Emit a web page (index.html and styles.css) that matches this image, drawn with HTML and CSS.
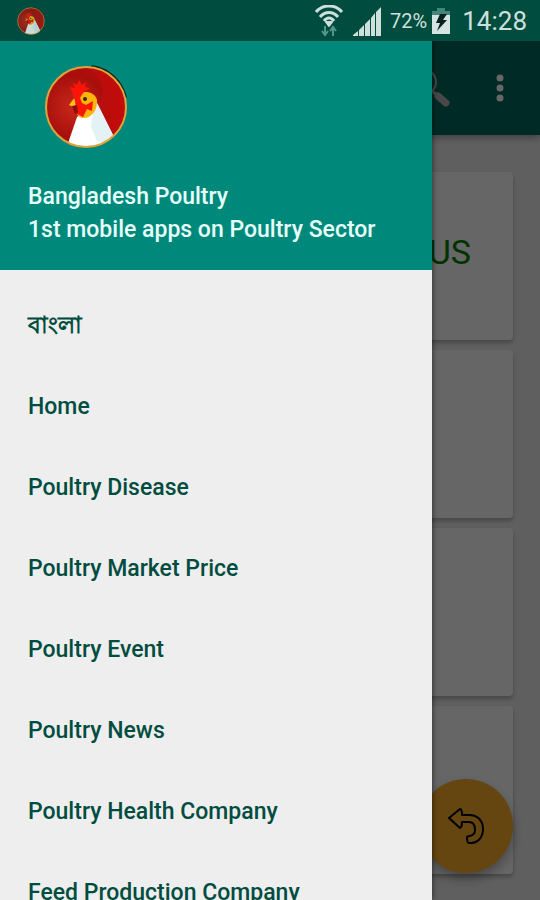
FILE: index.html
```html
<!DOCTYPE html>
<html lang="en">
<head>
    <meta charset="UTF-8">
    <meta name="viewport" content="width=device-width, initial-scale=1.0">
    <title>Bangladesh Poultry</title>
    <link rel="stylesheet" href="styles.css">
</head>
<body>

    <!-- Logo, used in the status bar and the drawer -->
    <svg class="defs" width="0" height="0" aria-hidden="true">
        <defs>
            <radialGradient id="red" cx="0.35" cy="0.5" r="0.65">
                <stop offset="0" stop-color="#c8281c"/>
                <stop offset="0.6" stop-color="#a80f0c"/>
                <stop offset="1" stop-color="#bd0a0a"/>
            </radialGradient>
            <clipPath id="disc"><circle cx="42" cy="42" r="40"/></clipPath>
        </defs>
        <symbol id="logo" viewBox="0 0 84 84">
            <path d="M48 0 A42 42 0 0 1 83 33 L78 30 L46 4 Z" fill="#10231a"/>
            <circle cx="42" cy="42" r="40" fill="url(#red)"/>
            <g clip-path="url(#disc)">
                <path d="M44 2 C60 14 62 30 52 44 L74 74 C90 50 86 10 44 2 Z" fill="#d00d0d" opacity="0.4"/>
                <path d="M33 52 L53 38 L59 50 L71 74 L66 84 L22 84 Z" fill="#fff"/>
                <path d="M53 38 L71 74 L66 80 L53 76 L47 62 L49 48 Z" fill="#e4f2f5"/>
                <path d="M34 30 C38 25 51 26 53 35 C54 46 46 54 39 53 C32 53 29 42 34 30 Z" fill="#fcb50c"/>
                <path d="M31 32 L25 40 L30 42 L35 36 Z" fill="#ffc21c"/>
                <path d="M28 27 L26 22 L31 23 L29 18 L33 20 L35 15 L38 20 L42 17 L41 22 L46 23 L39 28 L36 33 L38 38 L42 40 L49 36 L48 46 L43 44 L39 52 L33 49 L31 36 Z" fill="#fb1408"/>
                <path d="M28 41 L33 40 L34 48 L31 49 Z" fill="#8c0d0a"/>
                <circle cx="41" cy="34" r="2" fill="#3d2508"/>
            </g>
            <circle cx="42" cy="42" r="40" fill="none" stroke="#dfa43a" stroke-width="2"/>
        </symbol>
    </svg>

    <div class="screen">
        <!-- Status bar -->
        <div class="status-bar">
            <svg class="status-logo" viewBox="0 0 84 84" aria-hidden="true"><use href="#logo"/></svg>
            <div class="status-icons">
                <svg width="30" height="32" viewBox="0 0 30 32" aria-hidden="true">
                    <g fill="none" stroke="#cfe0dc" stroke-width="3">
                        <path d="M2 7 C9 -1 21 -1 28 7"/>
                        <path d="M6 12 C11 6 19 6 24 12"/>
                        <path d="M10 16 C13 12 17 12 20 16"/>
                    </g>
                    <path d="M12 17 L18 17 L15 21 Z" fill="#cfe0dc" stroke="#cfe0dc" stroke-width="2" stroke-linejoin="round"/>
                    <path d="M11 21 V30 M8 26 L11 30 L14 26 M19 31 V22 M16 26 L19 22 L22 26" fill="none" stroke="#54958a" stroke-width="2"/>
                </svg>
                <svg width="30" height="32" viewBox="0 0 30 32" aria-hidden="true">
                    <path d="M1 31 V30 L6 26 V31 Z M7 31 V25 L12 20 V31 Z M13 31 V19 L18 14 V31 Z M19 31 V13 L23 8 V31 Z M24 31 V7 L29 2 V31 Z" fill="#cfe0dc"/>
                </svg>
                <span class="battery-level">72%</span>
                <svg class="battery" width="18" height="28" viewBox="0 0 18 28" aria-hidden="true">
                    <path d="M5 1 H13 V4 H18 V9 H0 V4 H5 Z" fill="#438578"/>
                    <path d="M0 8 H18 V27 H0 Z" fill="#d5e4e1"/>
                    <path d="M8 7 H15 L11 13 H15 L5 24 L8 16 H4 Z" fill="#07221d"/>
                </svg>
                <span class="clock">14:28</span>
            </div>
        </div>

        <div class="content">
            <!-- Main page -->
            <header class="app-bar">
                <button class="icon-button" type="button" aria-label="Search">
                    <svg width="46" height="46" viewBox="0 0 46 46">
                        <circle cx="16" cy="17" r="12" fill="none" stroke="#b4b4b4" stroke-width="2"/>
                        <path d="M24 26 L29 30" stroke="#b4b4b4" stroke-width="3"/>
                        <path d="M30 31 L38 38" stroke="#b4b4b4" stroke-width="7" stroke-linecap="round"/>
                    </svg>
                </button>
                <button class="icon-button" type="button" aria-label="More options">
                    <svg width="8" height="30" viewBox="0 0 8 30" fill="#fff">
                        <circle cx="4" cy="5" r="3.5"/>
                        <circle cx="4" cy="15" r="3.5"/>
                        <circle cx="4" cy="25" r="3.5"/>
                    </svg>
                </button>
            </header>
            <main class="cards">
                <div class="card">US</div>
                <div class="card"></div>
                <div class="card"></div>
                <div class="card"></div>
            </main>
            <button class="fab" type="button" aria-label="Back">
                <svg width="38" height="38" viewBox="0 0 38 38" fill="none" stroke="#000" stroke-width="2" stroke-linejoin="round">
                    <path d="M2 11 L13 2 Q15 2 15 8 H22 C31 8 36 14 36 22 C36 31 30 37 22 36 Q20 36 20 30 Q20 29 23 29 C27 28 28 25 28 23 C28 18 26 15 22 15 H15 Q15 20 13 21 Z"/>
                </svg>
            </button>

            <div class="scrim"></div>

            <!-- Navigation drawer -->
            <aside class="drawer">
                <div class="drawer-header">
                    <svg class="avatar" viewBox="0 0 84 84" aria-hidden="true"><use href="#logo"/></svg>
                    <div>Bangladesh Poultry</div>
                    <div>1st mobile apps on Poultry Sector</div>
                </div>
                <nav class="menu">
                    <a href="#" lang="bn">বাংলা</a>
                    <a href="#">Home</a>
                    <a href="#">Poultry Disease</a>
                    <a href="#">Poultry Market Price</a>
                    <a href="#">Poultry Event</a>
                    <a href="#">Poultry News</a>
                    <a href="#">Poultry Health Company</a>
                    <a href="#">Feed Production Company</a>
                </nav>
            </aside>
        </div>
    </div>

</body>
</html>
```
FILE: styles.css
```css
* {
    box-sizing: border-box;
}

body {
    margin: 0;
    font-family: Roboto, "Noto Sans", sans-serif;
    background-color: #eee;
}

.defs {
    position: absolute;
}

.screen {
    display: flex;
    flex-direction: column;
    height: 100vh;
    overflow: hidden;
}

/* Status bar */
.status-bar {
    display: flex;
    flex: none;
    justify-content: space-between;
    align-items: center;
    height: 41px;
    padding: 0 13px 0 17px;
    background-color: #004d40;
    color: #cfe0dc;
}

.status-logo {
    width: 28px;
    height: 28px;
    opacity: 0.8;
}

.status-icons {
    display: flex;
    align-items: center;
    gap: 8px;
}

.battery-level {
    font-size: 20px;
}

.battery {
    margin-left: -3px;
}

.clock {
    margin-left: 4px;
    font-size: 26px;
}

/* Main page */
.content {
    position: relative;
    flex: 1;
    min-height: 0;
    overflow: hidden;
}

.app-bar {
    display: flex;
    justify-content: flex-end;
    align-items: center;
    gap: 42px;
    height: 94px;
    padding: 0 36px;
    background-color: #00695c;
    box-shadow: 0 2px 8px rgba(0, 0, 0, 0.4);
}

.icon-button {
    display: flex;
    padding: 0;
    border: 0;
    background: none;
}

.cards {
    display: flex;
    flex-direction: column;
    gap: 10px;
    padding: 37px 27px;
}

.card {
    display: flex;
    justify-content: flex-end;
    height: 168px;
    padding: 0 42px;
    border-radius: 4px;
    background-color: #fff;
    box-shadow: 0 3px 4px rgba(0, 0, 0, 0.25);
    color: #008000;
    font-size: 34px;
    line-height: 160px;
}

.fab {
    position: absolute;
    right: 27px;
    bottom: 27px;
    display: flex;
    justify-content: center;
    align-items: center;
    width: 94px;
    height: 94px;
    padding: 0;
    border: 0;
    border-radius: 50%;
    background-color: #fcac28;
    box-shadow: 0 6px 12px rgba(0, 0, 0, 0.3);
}

.scrim {
    position: absolute;
    inset: 0;
    background-color: rgba(0, 0, 0, 0.6);
}

/* Navigation drawer */
.drawer {
    position: absolute;
    top: 0;
    bottom: 0;
    left: 0;
    width: 80%;
    overflow: hidden;
    background-color: #eee;
    box-shadow: 0 0 6px rgba(0, 0, 0, 0.6);
    font-size: 23px;
    font-weight: 500;
}

.drawer-header {
    height: 229px;
    padding: 24px 28px;
    background-color: #00897b;
    color: #e6fffa;
    line-height: 33px;
}

.avatar {
    display: block;
    width: 84px;
    height: 84px;
    margin: 0 16px 31px;
}

.menu {
    display: flex;
    flex-direction: column;
    padding: 15px 0;
}

.menu a {
    padding: 0 28px;
    color: #004d40;
    line-height: 81px;
    text-decoration: none;
}

.menu a:lang(bn) {
    font-weight: 600;
}
```
